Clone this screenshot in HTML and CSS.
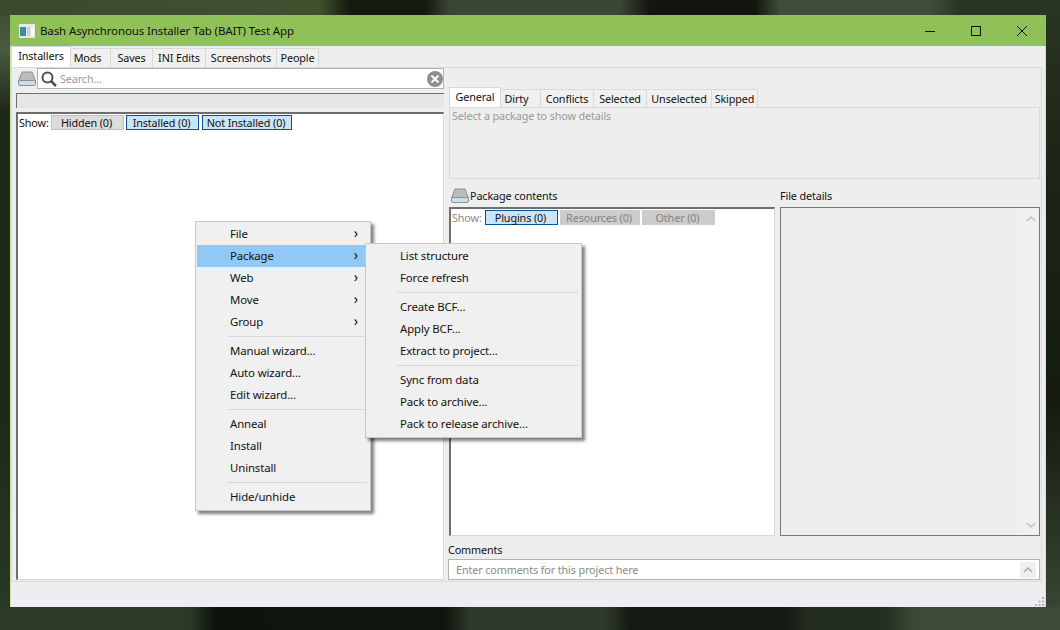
FILE: index.html
```html
<!DOCTYPE html>
<html lang="en">
<head>
    <meta charset="UTF-8">
    <title>Bash Asynchronous Installer Tab (BAIT) Test App</title>
    <link rel="stylesheet" href="styles.css">
</head>
<body>

<div class="window">
    <div class="titlebar">
        <svg class="app-icon" viewBox="0 0 16 14">
            <rect x="0" y="0" width="16" height="14" fill="#e4ebe6"/>
            <rect x="1" y="3" width="6" height="9" fill="#3f8d98"/>
            <rect x="8" y="3" width="3" height="9" fill="#c3d4dc"/>
            <rect x="12" y="3" width="3" height="9" fill="#f7f7f7"/>
        </svg>
        <span class="title-text">Bash Asynchronous Installer Tab (BAIT) Test App</span>
        <div class="win-buttons">
            <svg viewBox="0 0 46 30"><path d="M18 15.500h10" stroke="#111" fill="none"/></svg>
            <svg viewBox="0 0 46 30"><rect x="18.500" y="10.500" width="9" height="9" stroke="#111" fill="none"/></svg>
            <svg viewBox="0 0 46 30"><path d="M18 10l10 10M28 10l-10 10" stroke="#111" fill="none"/></svg>
        </div>
    </div>

    <div class="tabs main-tabs">
        <div class="tab active tab-installers">Installers</div>
        <div class="tab tab-mods">Mods</div>
        <div class="tab tab-saves">Saves</div>
        <div class="tab tab-ini">INI Edits</div>
        <div class="tab tab-shots">Screenshots</div>
        <div class="tab tab-people">People</div>
    </div>

    <div class="panel">
        <div class="left-col">
            <div class="search-row">
                <svg class="disk-icon" viewBox="0 0 18 15">
                    <path d="M4 1h10l3.500 9h-17z" fill="#b9bdc2" stroke="#8d9196"/>
                    <rect x="0.500" y="9.500" width="17" height="5" rx="1.500" fill="#c9ddea" stroke="#8d9196"/>
                </svg>
                <div class="search-box">
                    <svg class="search-icon" viewBox="0 0 16 16">
                        <circle cx="6.500" cy="6.500" r="5" fill="none" stroke="#4a4f52" stroke-width="2"/>
                        <path d="M10 10l5 5" stroke="#4a4f52" stroke-width="2.500"/>
                    </svg>
                    <span class="search-text">Search...</span>
                    <svg class="clear-icon" viewBox="0 0 16 16">
                        <circle cx="8" cy="8" r="8" fill="#8e8e8e"/>
                        <path d="M4.500 4.500l7 7M11.500 4.500l-7 7" stroke="#fff" stroke-width="2"/>
                    </svg>
                </div>
            </div>
            <div class="status-box"></div>
            <div class="list-box">
                <div class="filter-row">
                    <span class="show-label">Show:</span>
                    <div class="toggle off w73">Hidden (0)</div>
                    <div class="toggle on w73">Installed (0)</div>
                    <div class="toggle on w90">Not Installed (0)</div>
                </div>
            </div>
        </div>

        <div class="right-col">
            <div class="tabs detail-tabs">
                <div class="tab active tab-general">General</div>
                <div class="tab tab-dirty">Dirty</div>
                <div class="tab tab-conflicts">Conflicts</div>
                <div class="tab tab-selected">Selected</div>
                <div class="tab tab-unselected">Unselected</div>
                <div class="tab tab-skipped">Skipped</div>
            </div>
            <div class="details-panel">Select a package to show details</div>

            <div class="contents-row">
                <div class="contents-col">
                    <div class="col-label">
                        <svg class="disk-icon small" viewBox="0 0 18 15">
                            <path d="M4 1h10l3.500 9h-17z" fill="#b9bdc2" stroke="#8d9196"/>
                            <rect x="0.500" y="9.500" width="17" height="5" rx="1.500" fill="#c9ddea" stroke="#8d9196"/>
                        </svg>
                        Package contents
                    </div>
                    <div class="contents-box">
                        <div class="filter-row disabled">
                            <span class="show-label">Show:</span>
                            <div class="toggle on w73">Plugins (0)</div>
                            <div class="toggle dim w80">Resources (0)</div>
                            <div class="toggle dim w73">Other (0)</div>
                        </div>
                    </div>
                </div>
                <div class="file-col">
                    <div class="col-label file-label">File details</div>
                    <div class="file-box">
                        <div class="scrollbar">
                            <svg viewBox="0 0 10 6"><path d="M1 5l4-4 4 4" fill="none" stroke="#c4c4c4" stroke-width="1.500"/></svg>
                            <svg viewBox="0 0 10 6"><path d="M1 1l4 4 4-4" fill="none" stroke="#c4c4c4" stroke-width="1.500"/></svg>
                        </div>
                    </div>
                </div>
            </div>

            <div class="comments-label">Comments</div>
            <div class="comments-box">
                <span>Enter comments for this project here</span>
                <div class="comments-up">
                    <svg viewBox="0 0 10 6"><path d="M1 5l4-4 4 4" fill="none" stroke="#aaa" stroke-width="1.500"/></svg>
                </div>
            </div>
        </div>
    </div>

    <div class="statusbar">
        <svg class="grip" viewBox="0 0 11 11">
            <path d="M8 1h2v2h-2zM4.500 4.500h2v2h-2zM8 4.500h2v2h-2zM1 8h2v2h-2zM4.500 8h2v2h-2zM8 8h2v2h-2z" fill="#b4b4b4"/>
        </svg>
    </div>

    <div class="menu main-menu">
        <div class="menu-item">File<span class="arrow">&rsaquo;</span></div>
        <div class="menu-item current">Package<span class="arrow">&rsaquo;</span></div>
        <div class="menu-item">Web<span class="arrow">&rsaquo;</span></div>
        <div class="menu-item">Move<span class="arrow">&rsaquo;</span></div>
        <div class="menu-item">Group<span class="arrow">&rsaquo;</span></div>
        <div class="menu-sep"></div>
        <div class="menu-item">Manual wizard...</div>
        <div class="menu-item">Auto wizard...</div>
        <div class="menu-item">Edit wizard...</div>
        <div class="menu-sep"></div>
        <div class="menu-item">Anneal</div>
        <div class="menu-item">Install</div>
        <div class="menu-item">Uninstall</div>
        <div class="menu-sep"></div>
        <div class="menu-item">Hide/unhide</div>
    </div>

    <div class="menu sub-menu">
        <div class="menu-item">List structure</div>
        <div class="menu-item">Force refresh</div>
        <div class="menu-sep"></div>
        <div class="menu-item">Create BCF...</div>
        <div class="menu-item">Apply BCF...</div>
        <div class="menu-item">Extract to project...</div>
        <div class="menu-sep"></div>
        <div class="menu-item">Sync from data</div>
        <div class="menu-item">Pack to archive...</div>
        <div class="menu-item">Pack to release archive...</div>
    </div>
</div>

</body>
</html>
```

FILE: styles.css
```css
html, body {
    margin: 0;
    padding: 0;
    height: 630px;
    overflow: hidden;
}

body {
    font-family: "Noto Sans", "Open Sans", sans-serif;
    font-size: 10.8px;
    letter-spacing: -0.12px;
    color: #111;
    padding: 15px 0 0 10px;
    box-sizing: border-box;
    background-color: #1a2016;
    /* desktop wallpaper: only the strips round the window show */
    background-repeat: no-repeat;
    background-size: 1060px 15px, 1060px 23px, 10px 630px, 14px 630px;
    background-position: 0 0, 0 607px, 0 0, 1046px 0;
    background-image:
        linear-gradient(90deg, #3a4a2c 0, #40502f 320px, #141a10 350px, #141a10 425px, #3a4636 450px, #3a4636 620px, #141510 650px, #141510 755px, #3e4c38 780px, #3e4c38 930px, #2a3624 960px),
        linear-gradient(90deg, #2a3a26 0, #2a3a26 190px, #0e130c 215px, #10150e 445px, #2c3a2a 470px, #2c3a2a 605px, #141a12 630px, #141a12 785px, #242e20 810px, #242e20 885px, #3c4a36 915px),
        linear-gradient(180deg, #3a4a2c 0, #4c5a40 50px, #1e2a18 110px, #1e2a18 420px, #2a3a26 630px),
        linear-gradient(180deg, #2a3624 0, #20281a 120px, #141a10 400px, #3c4a36 630px);
}

/* Window frame */
.window {
    position: relative;
    width: 1036px;
    height: 592px;
    box-sizing: border-box;
    background-color: #eeeeee;
    border: 1px solid #cfe6a8;
    border-top: none;
}

.titlebar {
    display: flex;
    align-items: center;
    height: 31px;
    margin: 0 -1px;
    background-color: #90c058;
    font-size: 11.5px;
}

.app-icon {
    width: 16px;
    height: 14px;
    margin-left: 9px;
}

.title-text {
    margin-left: 5px;
}

.win-buttons {
    display: flex;
    margin-left: auto;
    margin-right: 1px;
}

.win-buttons svg {
    width: 46px;
    height: 30px;
}

/* Tabs */
.tabs {
    display: flex;
    height: 21px;
    align-items: flex-end;
}

.tab {
    height: 19px;
    line-height: 17px;
    text-align: center;
    box-sizing: border-box;
    background-color: #f0f0f0;
    border: 1px solid #d9d9d9;
    border-bottom: none;
    border-left: none;
}

.tab.active {
    height: 21px;
    line-height: 18px;
    background-color: #fff;
    border-left: 1px solid #d9d9d9;
}

.tab-installers { width: 60px; }
.tab-mods { width: 40px; padding-right: 6px; }
.tab-saves { width: 42px; }
.tab-ini { width: 53px; }
.tab-shots { width: 71px; }
.tab-people { width: 42px; }

.tab-general { width: 52px; }
.tab-dirty { width: 40px; padding-right: 8px; }
.tab-conflicts { width: 53px; }
.tab-selected { width: 53px; }
.tab-unselected { width: 65px; }
.tab-skipped { width: 46px; }

/* Main layout */
.panel {
    display: flex;
    gap: 4px;
    width: 1031px;
    height: 515px;
    box-sizing: border-box;
    padding: 0 1px 0 4px;
    border: 1px solid #d9d9d9;
}

.left-col {
    display: flex;
    flex-direction: column;
    width: 429px;
}

.right-col {
    display: flex;
    flex-direction: column;
    width: 592px;
    padding-top: 19px;
    box-sizing: border-box;
}

/* Search */
.search-row {
    display: flex;
    align-items: center;
    height: 21px;
}

.disk-icon {
    width: 18px;
    height: 15px;
    margin-left: 2px;
    flex: none;
}

.disk-icon.small {
    margin: 0 1px 0 2px;
}

.search-box {
    display: flex;
    align-items: center;
    flex: 1;
    height: 21px;
    margin-left: 1px;
    box-sizing: border-box;
    background-color: #fff;
    border: 1px solid #b4b4b4;
}

.search-icon {
    width: 16px;
    height: 16px;
    margin-left: 3px;
}

.search-text {
    margin-left: 3px;
    color: #9a9a9a;
}

.clear-icon {
    width: 16px;
    height: 16px;
    margin-left: auto;
}

.status-box {
    height: 15px;
    margin-top: 4px;
    background-color: #e6e6e6;
    border-top: 1px solid #6e6e6e;
    border-left: 1px solid #6e6e6e;
    box-sizing: border-box;
}

.list-box {
    flex: 1;
    margin-top: 4px;
    margin-bottom: 1px;
    background-color: #fff;
    border-top: 2px solid #6e6e6e;
    border-left: 2px solid #6e6e6e;
    border-right: 1px solid #d9d9d9;
    border-bottom: 1px solid #d9d9d9;
    box-sizing: border-box;
}

/* Filter toggles */
.filter-row {
    display: flex;
    align-items: center;
    gap: 2px;
    height: 15px;
    margin-top: 1px;
    padding-left: 1px;
}

.show-label {
    width: 30px;
}

.disabled .show-label {
    color: #8a8a8a;
    width: 31px;
}

.toggle {
    height: 15px;
    line-height: 13px;
    text-align: center;
    box-sizing: border-box;
    border: 1px solid #c0c0c0;
    padding-right: 2px;
}

.toggle.off {
    background-color: #dcdcdc;
}

.toggle.on {
    background-color: #cce4f7;
    border-color: #005499;
}

.toggle.dim {
    background-color: #cccccc;
    border-color: #cccccc;
    color: #838383;
}

.w73 { width: 73px; }
.w80 { width: 80px; }
.w90 { width: 90px; margin-left: 1px; }

/* Right column */
.detail-tabs {
    margin-left: 1px;
}

.details-panel {
    height: 72px;
    margin-left: 1px;
    margin-top: -1px;
    padding: 0 2px;
    box-sizing: border-box;
    color: #9a9a9a;
    border: 1px solid #d9d9d9;
    background-color: #eeeeee;
}

.contents-row {
    display: flex;
    gap: 5px;
    margin-top: 8px;
    margin-left: 1px;
}

.contents-col {
    width: 326px;
}

.file-col {
    width: 260px;
}

.col-label {
    display: flex;
    align-items: center;
    height: 20px;
    padding-bottom: 4px;
    box-sizing: border-box;
}

.contents-box,
.file-box {
    height: 329px;
    box-sizing: border-box;
    border: 1px solid #d9d9d9;
    border-top: 2px solid #6e6e6e;
    border-left: 2px solid #6e6e6e;
    background-color: #fff;
}

.file-box {
    display: flex;
    justify-content: flex-end;
    background-color: #eeeeee;
    border: 1px solid #7a7a7a;
}

.scrollbar {
    display: flex;
    flex-direction: column;
    justify-content: space-between;
    align-items: center;
    width: 16px;
    padding: 8px 0 7px;
    box-sizing: border-box;
    background-color: #f0f0f0;
}

.scrollbar svg {
    width: 10px;
    height: 6px;
}

.comments-label {
    height: 16px;
    line-height: 14px;
    margin-top: 7px;
}

.comments-box {
    display: flex;
    align-items: center;
    justify-content: space-between;
    height: 21px;
    padding-left: 7px;
    box-sizing: border-box;
    color: #8a8a8a;
    background-color: #fff;
    border: 1px solid #b4b4b4;
}

.comments-up {
    display: flex;
    align-items: center;
    justify-content: center;
    width: 16px;
    height: 16px;
    margin-right: 3px;
    background-color: #eeeeee;
}

.comments-up svg {
    width: 10px;
    height: 6px;
}

/* Status bar */
.statusbar {
    display: flex;
    justify-content: flex-end;
    align-items: flex-end;
    height: 24px;
    margin-top: 1px;
    box-sizing: border-box;
    background-color: #eeeef2;
}

.grip {
    width: 11px;
    height: 11px;
}

/* Context menus */
.menu {
    position: absolute;
    box-sizing: border-box;
    padding: 1px;
    background-color: #f0f0f0;
    border: 1px solid #c8c8c8;
    box-shadow: 3px 3px 3px rgba(0, 0, 0, 0.5);
    font-size: 11.4px;
}

.main-menu {
    left: 184px;
    top: 206px;
    width: 176px;
    height: 290px;
}

.sub-menu {
    left: 354px;
    top: 228px;
    width: 217px;
    height: 195px;
}

.menu-item {
    position: relative;
    height: 22px;
    line-height: 21px;
    padding-left: 33px;
}

.menu-item.current {
    background-color: #90c8f6;
    margin-right: 4px;
}

.arrow {
    position: absolute;
    right: 11px;
    top: -1px;
    font-size: 14px;
}

.main-menu .current .arrow {
    right: 7px;
}

.menu-sep {
    height: 1px;
    margin: 3px 2px 3px 30px;
    background-color: #d7d7d7;
}
```
